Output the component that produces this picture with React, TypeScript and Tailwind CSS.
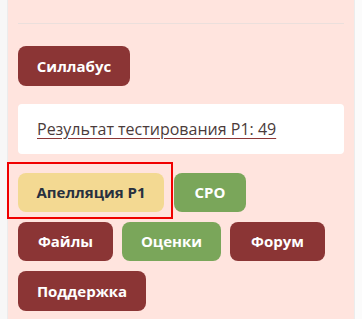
export default function App() {
  const btn =
    'h-[39px] rounded-lg text-[15px] font-bold flex items-center justify-center whitespace-nowrap'
  return (
    <div
      className="w-[362px] h-[319px] bg-[#f7f7f7] flex overflow-hidden"
      style={{ fontFamily: '"Open Sans", "Noto Sans", sans-serif' }}
    >
      <div className="w-[8px] h-full border-r border-[#ececec]" />
      <div className="w-[346px] h-full bg-[#ffe4de] px-[10px] pt-[23px]">
        <div className="h-px bg-[#ebdfdc]" />

        <button className={`${btn} mt-[22px] h-[40px] w-[112px] bg-[#8b3535] text-white`}>Силлабус</button>

        <div className="mt-[18px] h-[50px] bg-white rounded-[4px] flex items-center px-[19px]">
          <a className="text-[16px] text-[#4b3b3b] underline decoration-[#8b3535] underline-offset-[3px]">
            Результат тестирования Р1: 49
          </a>
        </div>

        <div className="mt-[19px] flex flex-col gap-[10px]">
          <div className="flex gap-[10px]">
            <div className="relative">
              <button className={`${btn} w-[146px] bg-[#f3d992] text-[#27303f]`}>Апелляция Р1</button>
              <div className="absolute left-[-11px] top-[-11px] w-[166px] h-[57px] border-2 border-[#f00000]" />
            </div>
            <button className={`${btn} w-[72px] bg-[#7aa65a] text-white`}>СРО</button>
          </div>
          <div className="flex gap-[9px]">
            <button className={`${btn} w-[95px] bg-[#8b3535] text-white`}>Файлы</button>
            <button className={`${btn} w-[99px] bg-[#7aa65a] text-white`}>Оценки</button>
            <button className={`${btn} w-[95px] bg-[#8b3535] text-white`}>Форум</button>
          </div>
          <div className="flex">
            <button className={`${btn} w-[128px] h-[40px] bg-[#8b3535] text-white`}>Поддержка</button>
          </div>
        </div>
      </div>
      <div className="flex-1 h-full border-l border-[#ececec] bg-[#fbfbfb]" />
    </div>
  )
}
